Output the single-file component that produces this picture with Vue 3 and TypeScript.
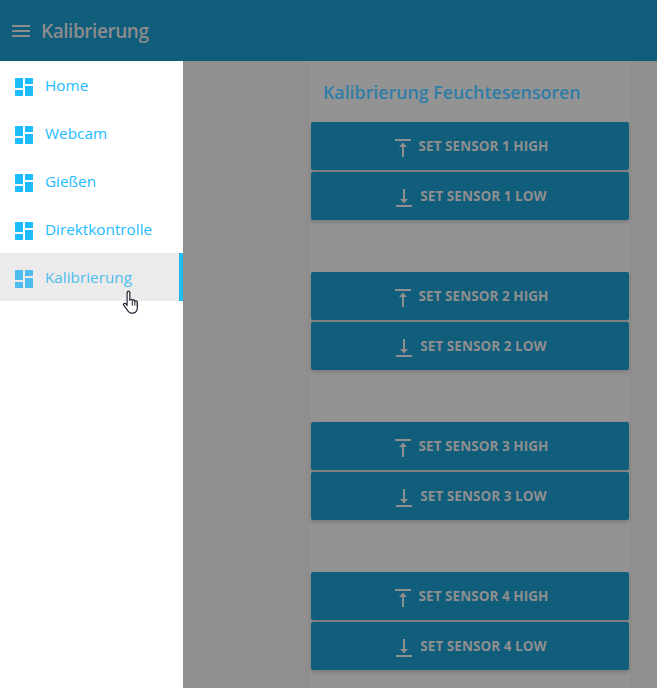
<template>
  <div class="app">
    <header class="topbar">
      <svg class="topbar__menu" viewBox="0 0 18 12" width="18" height="12">
        <path fill="currentColor" d="M0 0h18v2H0zM0 5h18v2H0zM0 10h18v2H0z" />
      </svg>
      <span class="topbar__title">Kalibrierung</span>
    </header>

    <div class="body">
      <nav class="sidebar">
        <a
          v-for="item in navItems"
          :key="item"
          :class="['nav-item', { 'is-active': item === activeItem }]"
        >
          <svg class="nav-item__icon" viewBox="0 0 18 18" width="18" height="18">
            <path fill="currentColor" d="M0 0h8v10H0zM0 12h8v6H0zM10 0h8v6h-8zM10 8h8v10h-8z" />
          </svg>
          <span>{{ item }}</span>
        </a>
      </nav>

      <main class="main">
        <section class="panel">
          <h2 class="panel__title">Kalibrierung Feuchtesensoren</h2>
          <div v-for="sensor in sensors" :key="sensor" class="sensor-group">
            <button class="sensor-btn">
              <svg class="sensor-btn__icon" viewBox="0 0 16 18" width="16" height="18">
                <path fill="currentColor" d="M0 0h16v2H0zM8 3.600 12 8H9v10H7V8H4z" />
              </svg>
              <span>SET SENSOR {{ sensor }} HIGH</span>
            </button>
            <button class="sensor-btn">
              <svg class="sensor-btn__icon" viewBox="0 0 16 18" width="16" height="18">
                <path fill="currentColor" d="M0 16h16v2H0zM7 0h2v10h3l-4 4.400L4 10h3z" />
              </svg>
              <span>SET SENSOR {{ sensor }} LOW</span>
            </button>
          </div>
        </section>
      </main>
    </div>

    <!-- mouse pointer captured in the screenshot -->
    <svg class="cursor" viewBox="0 0 18 24" width="20" height="26">
      <path
        fill="#fff"
        stroke="#1f2430"
        stroke-width="1.1"
        stroke-linejoin="round"
        d="M4.500 2.300c0-1.600 2.500-1.600 2.500 0v7.200c0-1.300 2.300-1.300 2.300 0v.6c0-1.300 2.300-1.300 2.300 0v.8c0-1.200 2.300-1.200 2.300.2v5.400c0 2.400-1.500 4.800-3.700 4.800H8.200c-1.400 0-2.200-.8-3-2L1.300 14c-.7-1.300.9-2.300 1.900-1.300l1.300 1.500z"
      />
      <path fill="none" stroke="#1f2430" stroke-width="0.9" d="M9.300 10.500v4M11.600 10.900v3.600M13.900 11.700v3" />
    </svg>
  </div>
</template>

<script setup lang="ts">
const navItems: string[] = ['Home', 'Webcam', 'Gießen', 'Direktkontrolle', 'Kalibrierung']
const activeItem = 'Kalibrierung'
const sensors: number[] = [1, 2, 3, 4]
</script>

<style>
html,
body {
  margin: 0;
  overflow: hidden;
}
</style>

<style scoped>
.app {
  position: relative;
  width: 657px;
  height: 688px;
  overflow: hidden;
  font-family: "Open Sans", "Noto Sans", sans-serif;
}

.topbar {
  display: flex;
  align-items: center;
  gap: 11px;
  height: 61px;
  padding-left: 12px;
  box-sizing: border-box;
  background: #115d7c;
  color: #8c8c8c;
}

.topbar__title {
  font-size: 19px;
  font-weight: 600;
  letter-spacing: -0.45px;
}

.body {
  display: flex;
  height: 627px;
}

.sidebar {
  flex: none;
  width: 183px;
  background: #fff;
}

.nav-item {
  display: flex;
  align-items: center;
  gap: 12px;
  height: 48px;
  padding-left: 15px;
  box-sizing: border-box;
  color: #1dbcff;
  font-size: 15.3px;
}

.nav-item__icon {
  margin-top: 4px;
}

.nav-item.is-active {
  background: #ebebeb;
  border-right: 4px solid #25bbf5;
  color: #4fbcef;
}

.main {
  flex: 1;
  background: #8f8f8f;
  padding-left: 127px;
  padding-right: 27px;
}

.panel {
  height: 100%;
  background: #939393;
  box-sizing: border-box;
}

.panel__title {
  margin: 0;
  height: 61px;
  padding: 19px 0 0 13px;
  box-sizing: border-box;
  color: #2f7da6;
  font-size: 17.8px;
  font-weight: 600;
  line-height: 24px;
}

.sensor-group {
  display: flex;
  flex-direction: column;
  gap: 2px;
  margin-bottom: 52px;
}

.sensor-btn {
  display: flex;
  align-items: center;
  justify-content: center;
  gap: 8px;
  height: 48px;
  width: 318px;
  margin-left: 1px;
  padding: 0 0 0 3px;
  border: 0;
  border-radius: 2px;
  background: #115d7c;
  color: #8f8f8f;
  font-family: inherit;
  font-size: 13.5px;
  letter-spacing: 0.05px;
  font-weight: 700;
  box-shadow: 0 2px 4px rgba(0, 0, 0, 0.18);
}

.sensor-btn__icon {
  flex: none;
  margin-top: 4px;
}

.cursor {
  position: absolute;
  left: 122px;
  top: 290px;
}
</style>
